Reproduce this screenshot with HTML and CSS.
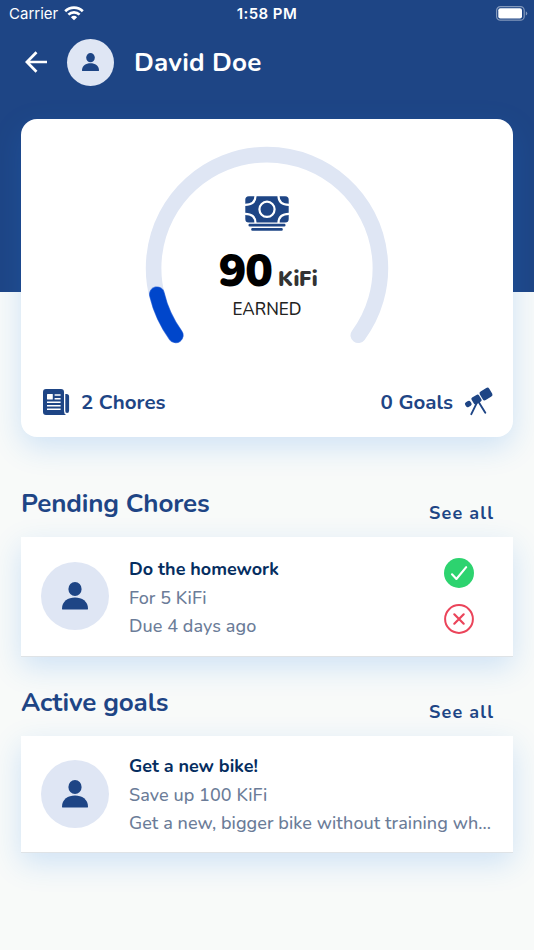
FILE: index.html
```html
<!DOCTYPE html>
<html lang="en">
<head>
<meta charset="utf-8">
<meta name="viewport" content="width=device-width, initial-scale=1">
<title>David Doe</title>
<link rel="stylesheet" href="styles.css">
</head>
<body>
<svg class="defs" width="0" height="0" aria-hidden="true">
  <symbol id="person" viewBox="0 0 26 28">
    <ellipse cx="13" cy="7" rx="6.600" ry="7"/>
    <path d="M0 26.400C0 19.600 6 15.600 13 15.600s13 4 13 10.800c0 .8-.5 1.200-1.200 1.200H1.200C.5 27.600 0 27.200 0 26.400Z"/>
  </symbol>
</svg>
<div class="app">
  <div class="status">
    <div class="carrier"><span>Carrier</span>
      <svg width="20" height="15" viewBox="0 0 20 15" fill="none" stroke="#fff" stroke-width="2.700"><path d="M1.200 5.200a12.600 12.600 0 0 1 17.600 0M4.400 8.600a8 8 0 0 1 11.200 0"/><path d="M10 14.300 6.900 11.200a4.500 4.500 0 0 1 6.200 0Z" fill="#fff" stroke="none"/></svg>
    </div>
    <div class="time">1:58 PM</div>
    <svg class="battery" width="32" height="15" viewBox="0 0 32 15"><rect x=".6" y=".6" width="27.600" height="13.600" rx="3.800" fill="none" stroke="#fff" stroke-opacity=".45" stroke-width="1.200"/><rect x="2.300" y="2.300" width="23.700" height="10.200" rx="2" fill="#fff"/><path d="M29.800 5.200q1.500.8 1.500 2.200t-1.500 2.200Z" fill="#fff" fill-opacity=".45"/></svg>
  </div>
  <header class="nav">
    <svg class="back" width="24" height="22" viewBox="0 0 24 22" fill="none" stroke="#fff" stroke-width="2.700"><path d="M12.500 1.200 2.900 11l9.600 9.800M2.700 11H23"/></svg>
    <div class="avatar small"><svg width="17" height="18.500"><use href="#person"/></svg></div>
    <h1>David Doe</h1>
  </header>
  <section class="summary">
    <div class="gauge">
      <svg class="arc" width="246" height="200" viewBox="0 0 246 200" fill="none" stroke-linecap="round"><path d="M31.700 189.300A113.400 113.400 0 1 1 214.300 189.300" stroke="#dfe6f4" stroke-width="15.600"/><path d="M12.900 148.300A113.400 113.400 0 0 0 31.700 189.300" stroke="#4d7ce0" stroke-width="15.800"/><path d="M12.900 148.300A113.400 113.400 0 0 0 31.700 189.300" stroke="#0046cb" stroke-width="14.600"/></svg>
      <div class="earned">
        <svg width="44" height="36" viewBox="0 0 44 36"><rect x=".3" y=".3" width="43.400" height="26.200" rx="3.500" fill="#1e4585"/><g fill="none" stroke="#fff" stroke-width="2.200"><circle cx="22" cy="13.300" r="7.600"/><path d="M10.500 0Q10.500 8.800 0 8.800M33.500 0Q33.500 8.800 44 8.800M10.500 27Q10.500 17.800 0 17.800M33.500 27Q33.500 17.800 44 17.800"/></g><path d="M4.800 29.200h34.400M7.500 33.400h29" stroke="#1e4585" stroke-width="2.700" stroke-linecap="round"/></svg>
        <div class="amount"><span class="number">90</span><span class="unit">KiFi</span></div>
        <div class="label">EARNED</div>
      </div>
    </div>
    <div class="stats">
      <div class="stat">
        <svg width="27" height="27" viewBox="0 0 27 27"><path d="M3 0h15q3 0 3 3v19q0 3 2.200 4H3q-3 0-3-3V3Q0 0 3 0Z" fill="#1e4585"/><path d="M22.300 5h1.200q2.600 0 2.600 2.600v13.800q0 2.600-2 2.600t-1.800-2.200Z" fill="#1e4585"/><rect x="4" y="5" width="5.800" height="5.500" rx=".5" fill="#fff"/><path d="M11.600 5.900h6M11.600 9.700h6M4 13.200h13.600M4 16.700h13.600M4 20.300h13.600" stroke="#fff" stroke-width="1.500"/></svg>
        <span>2 Chores</span>
      </div>
      <div class="stat goals">
        <span>0 Goals</span>
        <svg class="scope" width="28" height="28" viewBox="0 0 28 28" fill="#1e4585"><rect x="-5.500" y="-5" width="11" height="10" rx="2.200" transform="translate(21 6) rotate(-31)"/><rect x="-4.300" y="-3.900" width="8.600" height="7.800" rx="1.500" transform="translate(11.500 11.500) rotate(-31)"/><rect x="-3.100" y="-2.700" width="6.200" height="5.400" rx="1.900" transform="translate(3.300 16) rotate(-31)"/><path d="M12.200 14.200 6.300 26.200M13.800 14.200l6.500 10.500" fill="none" stroke="#1e4585" stroke-width="1.900" stroke-linecap="round"/></svg>
      </div>
    </div>
  </section>
  <section class="group">
    <div class="heading"><h2>Pending Chores</h2><a>See all</a></div>
    <article class="card chore">
      <div class="avatar"><svg width="26" height="28"><use href="#person"/></svg></div>
      <div class="text"><h3>Do the homework</h3><p>For 5 KiFi</p><p>Due 4 days ago</p></div>
      <div class="actions">
        <svg width="30" height="30" viewBox="0 0 30 30"><circle cx="15" cy="15" r="15" fill="#2dd36f"/><path d="m8 16.300 4.400 4.700 9.800-11.800" fill="none" stroke="#fff" stroke-width="2.100" stroke-linecap="round" stroke-linejoin="round"/></svg>
        <svg width="30" height="30" viewBox="0 0 30 30" fill="none" stroke="#eb445a" stroke-width="2"><circle cx="15" cy="15" r="13.900"/><path d="m10.300 10.300 9.400 9.400m0-9.400-9.400 9.400" stroke-width="2.200" stroke-linecap="round"/></svg>
      </div>
    </article>
  </section>
  <section class="group">
    <div class="heading"><h2>Active goals</h2><a>See all</a></div>
    <article class="card goal">
      <div class="avatar"><svg width="26" height="28"><use href="#person"/></svg></div>
      <div class="text"><h3>Get a new bike!</h3><p>Save up 100 KiFi</p><p>Get a new, bigger bike without training wh...</p></div>
    </article>
  </section>
</div>
</body>
</html>
```
FILE: styles.css
```css
* { box-sizing: border-box; }
body { margin: 0; }
svg { display: block; flex: none; }
.defs { position: absolute; }
h1, h2, h3, p { margin: 0; white-space: nowrap; }
.app {
  height: 950px;
  overflow: hidden;
  background: linear-gradient(#1e4585 292px, #f8faf9 292px);
  font-family: Nunito, Lato, sans-serif;
  color: #1e4585;
}
.status {
  height: 28px;
  padding: 0 7px 0 9px;
  display: grid;
  grid-template-columns: 1fr auto 1fr;
  align-items: center;
  color: #fff;
  font: 15px/28px Inter, sans-serif;
}
.carrier { display: flex; align-items: center; gap: 6px; }
.carrier svg { margin-top: -2px; }
.time { font-weight: 600; letter-spacing: .4px; margin-right: 2px; }
.battery { justify-self: end; margin: -2px -1px 0 0; }
.nav { height: 68px; padding-left: 24px; display: flex; align-items: center; color: #fff; }
.avatar {
  width: 68px;
  height: 68px;
  flex: none;
  border-radius: 50%;
  background: #dfe6f4;
  display: flex;
  align-items: center;
  justify-content: center;
  fill: #1e4585;
}
.avatar.small { width: 47px; height: 47px; margin: 0 20px 0 19px; }
h1 { font-size: 26px; font-weight: 700; letter-spacing: .2px; }
.summary {
  height: 318px;
  margin: 23px 21px 0;
  background: #fff;
  border-radius: 16px;
  box-shadow: 0 10px 30px rgba(30, 130, 235, .19);
}
.gauge { display: grid; justify-items: center; padding-top: 27px; height: 248px; }
.gauge > * { grid-area: 1 / 1; }
.earned { padding-top: 49.500px; display: flex; flex-direction: column; align-items: center; }
.amount { height: 46px; line-height: 46px; margin: 16px 0 0 2px; color: #000; display: flex; align-items: baseline; gap: 6px; }
.number { font-size: 46px; font-weight: 900; letter-spacing: -1px; }
.unit { font-size: 21px; line-height: 21px; font-weight: 900; color: #333; letter-spacing: -.3px; }
.label { font-size: 17px; line-height: 20px; font-weight: 500; color: #222; margin-top: 6px; }
.stats { display: flex; justify-content: space-between; padding: 0 20px 0 22px; height: 70px; }
.stat { display: flex; align-items: center; gap: 11px; height: 70px; font-size: 20.500px; font-weight: 700; }
.goals { gap: 12px; }
.scope { overflow: visible; }
.heading { display: flex; justify-content: space-between; margin: 0 20px 0 21px; height: 52px; }
.group { margin-top: 48px; }
.group + .group { margin-top: 27px; }
h2 { font-size: 26px; line-height: 38px; font-weight: 700; letter-spacing: -.13px; }
a { font-size: 18px; line-height: 26px; font-weight: 700; letter-spacing: 1.150px; margin-top: 15px; width: 85px; }
.card {
  margin: 0 21px;
  padding-left: 20px;
  background: #fff;
  border-bottom: 1px solid #dfe3e6;
  display: flex;
  align-items: center;
  box-shadow: 0 10px 28px rgba(30, 130, 235, .19);
}
.card .avatar { margin-top: -1px; }
.chore { height: 120px; }
.goal { height: 117px; }
.text { flex: 1; margin: 2px 0 0 20px; font-size: 18px; line-height: 28.500px; font-weight: 500; letter-spacing: .07px; color: #6b7c98; }
.chore .text { margin-top: 3px; }
h3 { font-size: 18px; font-weight: 700; letter-spacing: 0; color: #052d60; }
.actions { display: flex; flex-direction: column; gap: 16px; margin: -1px 39px 0 0; }
```
